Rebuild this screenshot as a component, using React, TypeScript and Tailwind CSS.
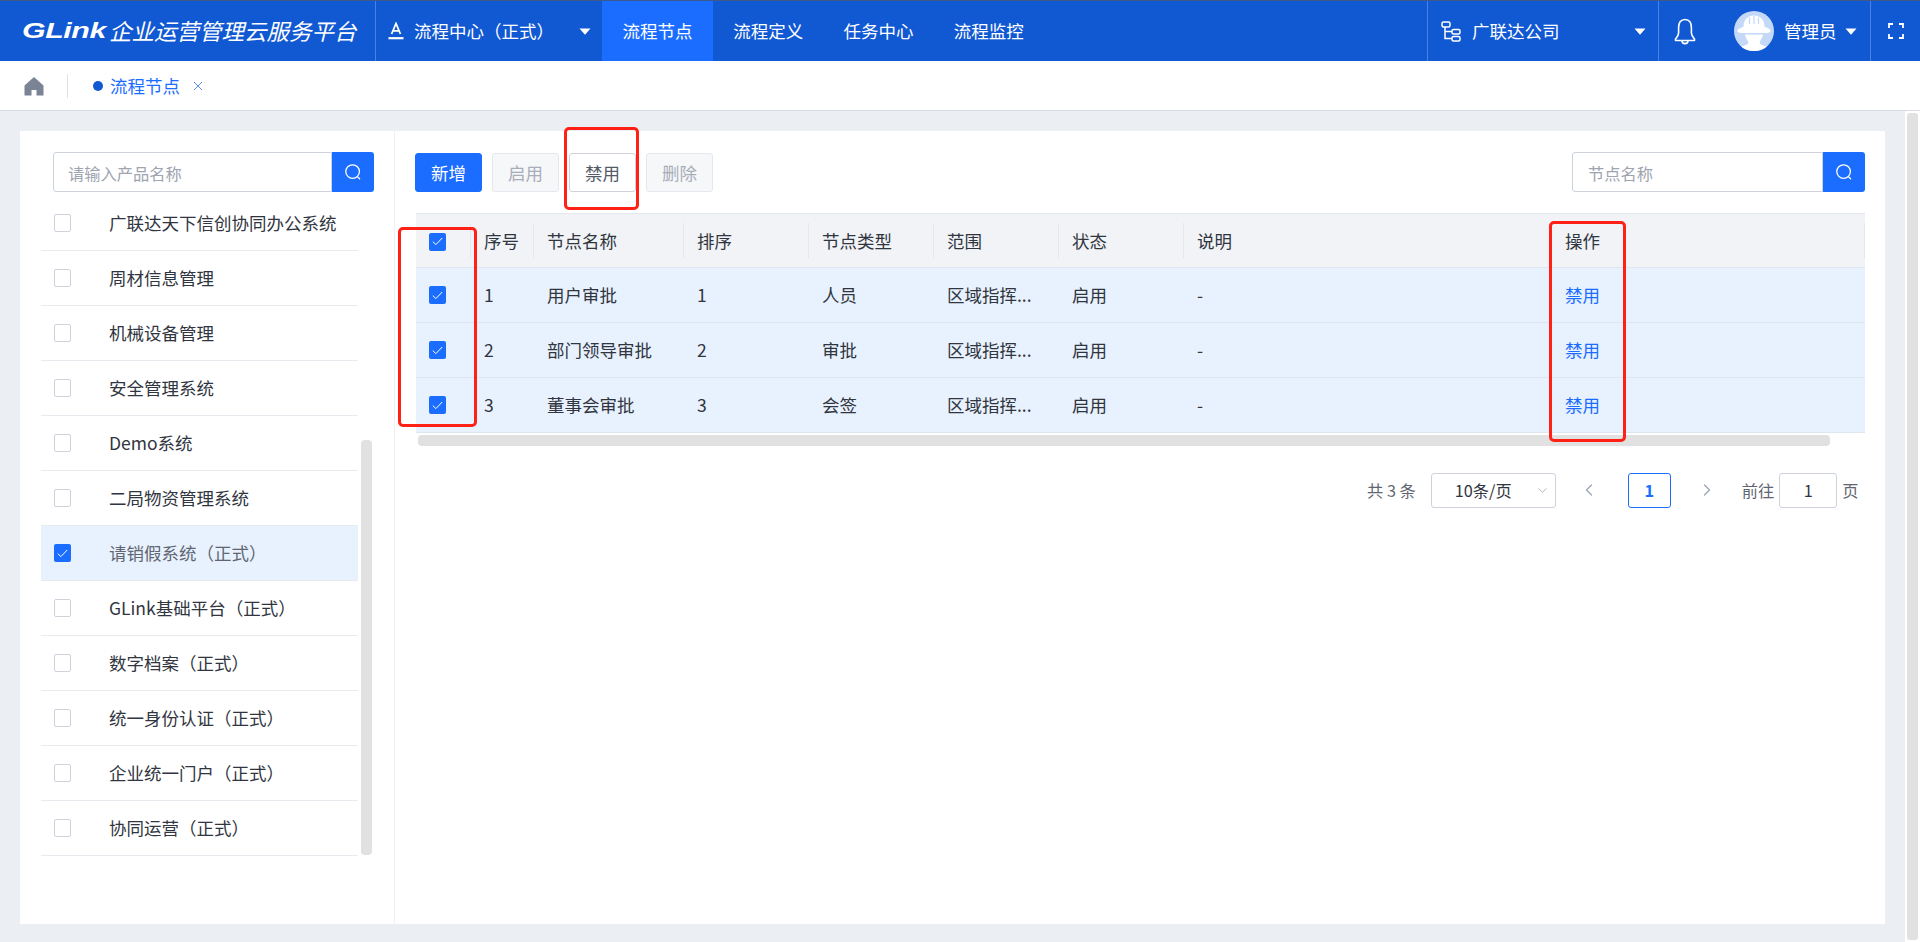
import React from "react";
import { ChevronDown, ChevronLeft, ChevronRight } from "lucide-react";

const Caret = () => (
  <svg width="12" height="7" viewBox="0 0 12 7" className="shrink-0">
    <path d="M0.5 0.5H11.5L6 6.8Z" fill="#fff" />
  </svg>
);

const SearchIcon = () => (
  <svg width="18" height="18" viewBox="0 0 18 18" fill="none" stroke="#fff" strokeWidth="1.3" strokeLinecap="round">
    <circle cx="8.6" cy="8.6" r="6.8" />
    <path d="M13.4 13.6L15.6 15.8" />
  </svg>
);

const Check = ({ checked }: { checked?: boolean }) =>
  checked ? (
    <span className="flex h-[18px] w-[17px] shrink-0 items-center justify-center rounded-[2px] bg-[#1a6dff]">
      <svg width="11" height="9" viewBox="0 0 11 9" fill="none" stroke="#fff" strokeWidth="1">
        <path d="M0.8 4.6L3.9 7.6L10.2 1" />
      </svg>
    </span>
  ) : (
    <span className="h-[18px] w-[17px] shrink-0 rounded-[2px] border border-[#cdd2dd] bg-white" />
  );

const products = [
  "广联达天下信创协同办公系统",
  "周材信息管理",
  "机械设备管理",
  "安全管理系统",
  "Demo系统",
  "二局物资管理系统",
  "请销假系统（正式）",
  "GLink基础平台（正式）",
  "数字档案（正式）",
  "统一身份认证（正式）",
  "企业统一门户（正式）",
  "协同运营（正式）",
];

const gridCols = "grid grid-cols-[55px_63px_150px_125px_125px_125px_125px_368px_313px]";

const headers = ["序号", "节点名称", "排序", "节点类型", "范围", "状态", "说明", "操作"];

const rows = [
  ["1", "用户审批", "1", "人员", "区域指挥...", "启用", "-"],
  ["2", "部门领导审批", "2", "审批", "区域指挥...", "启用", "-"],
  ["3", "董事会审批", "3", "会签", "区域指挥...", "启用", "-"],
];

const NavTab = ({ label, active }: { label: string; active?: boolean }) => (
  <div className={`flex h-full items-center justify-center ${active ? "w-[111px] bg-[#1a6dff]" : "w-[110.3px]"}`}>{label}</div>
);

const ToolButton = ({ label, kind }: { label: string; kind: "primary" | "disabled" | "normal" }) => (
  <div
    className={`flex h-[39px] w-[67px] items-center justify-center rounded-[3px] border pt-[2px] ${
      kind === "primary"
        ? "border-[#1a6dff] bg-[#1a6dff] text-white"
        : kind === "disabled"
          ? "border-[#e4e7ed] bg-[#f6f7f9] text-[#a8aeb9]"
          : "border-[#cdd2dd] bg-white text-[#555b66]"
    }`}
  >
    {label}
  </div>
);

const RedBox = ({ className }: { className: string }) => (
  <div className={`pointer-events-none absolute rounded-[5px] border-[3px] border-[#ff2016] ${className}`} />
);

export default function App() {
  return (
    <div className="relative flex h-[942px] w-[1920px] flex-col overflow-hidden bg-[#ebeef2] font-['Noto_Sans_CJK_SC','Noto_Sans',sans-serif] text-[17.5px] text-[#303540]">
      {/* top bar */}
      <header className="flex h-[61px] shrink-0 items-stretch border-t border-[#3d5a8a] bg-[#1158d3] text-white">
        <div className="flex w-[376px] shrink-0 items-center border-r border-[#4a82e0] pl-[22px]">
          <span className="inline-block w-[81px]">
            <span className="inline-block origin-left scale-x-[1.38] font-['Liberation_Sans',sans-serif] text-[22px] leading-none font-bold tracking-[-0.3px] italic">GLink</span>
          </span>
          <span className="ml-[6px] text-[22.5px] whitespace-nowrap italic">企业运营管理云服务平台</span>
        </div>
        <div className="flex w-[226px] shrink-0 items-center pl-[12px]">
          <svg width="16" height="18" viewBox="0 0 16 18" fill="none" stroke="#fff" strokeWidth="1.8">
            <path d="M3.6 12L8 1.5L12.4 12M5.2 8.8H10.8" />
            <path d="M0.5 16.2H15.5" strokeWidth="2.2" />
          </svg>
          <span className="ml-[10px] whitespace-nowrap">流程中心（正式）</span>
          <span className="ml-[25px]">
            <Caret />
          </span>
        </div>
        <NavTab label="流程节点" active />
        <NavTab label="流程定义" />
        <NavTab label="任务中心" />
        <NavTab label="流程监控" />
        <div className="flex-1" />
        <div className="flex w-[232px] shrink-0 items-center border-x border-[#4a82e0] pl-[13px]">
          <svg width="20" height="21" viewBox="0 0 20 21" fill="none" stroke="#fff" strokeWidth="1.5">
            <rect x="1" y="1" width="8" height="5" rx="1.5" />
            <rect x="11" y="8.5" width="8" height="4.5" rx="1.5" />
            <rect x="11" y="15.5" width="8" height="4.5" rx="1.5" />
            <path d="M4 6V17.5H11M4 10.5H11" />
          </svg>
          <span className="ml-[11px] whitespace-nowrap">广联达公司</span>
          <span className="ml-[74px]">
            <Caret />
          </span>
        </div>
        <div className="flex w-[211px] shrink-0 items-center pl-[15px]">
          <svg width="22" height="27" viewBox="0 0 22 27" fill="none" stroke="#fff" strokeWidth="1.6" strokeLinejoin="round">
            <path d="M11 1.5C6.5 1.5 4.6 5 4.6 9.5V15C4.6 17.5 2.6 19.5 1.5 21V22.5H20.5V21C19.4 19.5 17.4 17.5 17.4 15V9.5C17.4 5 15.5 1.5 11 1.5Z" />
            <path d="M8 22.5C8 24.5 9.3 25.6 11 25.6C12.7 25.6 14 24.5 14 22.5" />
          </svg>
          <svg width="40" height="40" viewBox="0 0 40 40" className="ml-[38px] shrink-0">
            <circle cx="20" cy="20" r="20" fill="#c4d9f8" />
            <path d="M9.5 16C9.5 8.5 14 4.5 20 4.5C26 4.5 30.5 8.5 30.5 16C33 16.5 36.5 18 36.5 20C36.5 21.5 34 22 32 22H8C6 22 3.5 21.5 3.5 20C3.5 18 7 16.5 9.5 16Z" fill="#fff" />
            <path d="M11 23.5H29C28.6 27 26 29.5 25.6 31.5C25.4 33 29 34.5 33 35.5C29.5 38.5 25 40 20 40C15 40 10.5 38.5 7 35.5C11 34.5 14.6 33 14.4 31.5C14 29.5 11.4 27 11 23.5Z" fill="#fff" />
            <path d="M15.5 6.5V13M20 5V13M24.5 6.5V13" stroke="#c4d9f8" strokeWidth="1.2" />
          </svg>
          <span className="ml-[10px] whitespace-nowrap">管理员</span>
          <span className="ml-[8px]">
            <Caret />
          </span>
        </div>
        <div className="flex w-[50px] shrink-0 items-center justify-center border-l border-[#4a82e0]">
          <svg width="16" height="16" viewBox="0 0 16 16" fill="none" stroke="#fff" strokeWidth="1.8">
            <path d="M1 5V1H5M11 1H15V5M15 11V15H11M5 15H1V11" />
          </svg>
        </div>
      </header>

      {/* tab strip */}
      <div className="flex h-[50px] shrink-0 items-center border-b border-[#d8dce6] bg-white">
        <svg width="20" height="20" viewBox="0 0 20 20" className="ml-[24px] shrink-0">
          <path d="M10 1L0.5 9.5V19.5H7.5V14H12.5V19.5H19.5V9.5Z" fill="#7b8494" />
        </svg>
        <div className="ml-[23px] h-[24px] w-px bg-[#dfe2e8]" />
        <span className="ml-[25px] h-[10px] w-[10px] rounded-full bg-[#1158d3]" />
        <span className="ml-[7px] pt-[2px] text-[#1a6dff]">流程节点</span>
        <svg width="10" height="10" viewBox="0 0 10 10" className="ml-[13px]" stroke="#5f8ff0" strokeWidth="1">
          <path d="M1 1L9 9M9 1L1 9" />
        </svg>
      </div>

      {/* body */}
      <div className="flex min-h-0 flex-1">
        <main className="flex min-w-0 flex-1 pt-[20px] pr-[20px] pb-[18px] pl-[20px]">
          <div className="flex flex-1 bg-white">
            {/* left panel */}
            <aside className="flex w-[375px] shrink-0 flex-col overflow-hidden border-r border-[#eef0f4]">
              <div className="mt-[21px] ml-[33px] flex h-[40px] w-[321px] shrink-0">
                <div className="flex flex-1 items-center rounded-l-[3px] border border-[#cdd2dd] pt-[2px] pl-[14px] text-[16.25px] text-[#9ea4b0]">请输入产品名称</div>
                <div className="flex w-[42px] items-center justify-center rounded-r-[3px] bg-[#1a6dff]">
                  <SearchIcon />
                </div>
              </div>
              <div className="mt-[4px] flex">
                <ul className="ml-[21px] w-[317px]">
                  {products.map((p) => {
                    const sel = p === "请销假系统（正式）";
                    return (
                      <li key={p} className={`flex h-[55px] items-center border-b border-[#e8eaef] pl-[13px] ${sel ? "bg-[#e8f2fe] text-[#5f6672]" : ""}`}>
                        <Check checked={sel} />
                        <span className="ml-[38px] whitespace-nowrap">{p}</span>
                      </li>
                    );
                  })}
                </ul>
                <div className="mt-[244px] ml-[3px] h-[415px] w-[11px] rounded-[4px] bg-[#e1e1e1]" />
              </div>
            </aside>

            {/* right panel */}
            <section className="flex min-w-0 flex-1 flex-col pt-[21px] pr-[20px] pl-[20px]">
              <div className="flex h-[40px] shrink-0 items-center">
                <div className="flex gap-[10px]">
                  <ToolButton label="新增" kind="primary" />
                  <ToolButton label="启用" kind="disabled" />
                  <ToolButton label="禁用" kind="normal" />
                  <ToolButton label="删除" kind="disabled" />
                </div>
                <div className="ml-auto flex h-[40px] w-[293px]">
                  <div className="flex flex-1 items-center rounded-l-[3px] border border-[#cdd2dd] pt-[2px] pl-[15px] text-[16.25px] text-[#9ea4b0]">节点名称</div>
                  <div className="flex w-[42px] items-center justify-center rounded-r-[3px] bg-[#1a6dff]">
                    <SearchIcon />
                  </div>
                </div>
              </div>

              <div className="mt-[21px] ml-px">
                <div className={`${gridCols} h-[54px] items-center border-t border-[#e4e7ed] bg-[#f1f3f6]`}>
                  <div className="flex h-[35px] items-center border-r border-[#e4e7ed] pt-[2px] pl-[13px]">
                    <Check checked />
                  </div>
                  {headers.map((h) => (
                    <div key={h} className="flex h-[35px] items-center border-r border-[#e4e7ed] pt-[2px] pl-[13px] whitespace-nowrap">
                      {h}
                    </div>
                  ))}
                </div>
                {rows.map((r) => (
                  <div key={r[0]} className={`${gridCols} h-[55px] items-center border-t border-[#dfe6f0] bg-[#e8f2fe]`}>
                    <div className="pl-[13px]">
                      <Check checked />
                    </div>
                    {r.map((c, i) => (
                      <div key={i} className="pl-[13px] whitespace-nowrap">
                        {c}
                      </div>
                    ))}
                    <div className="pl-[13px] text-[#1a6dff]">禁用</div>
                  </div>
                ))}
                <div className="h-px bg-[#dfe6f0]" />
                <div className="mt-[2px] ml-[2px] h-[11px] w-[1412px] rounded-[4px] bg-[#e1e1e1]" />
              </div>

              <div className="mt-[26px] flex h-[36px] items-center text-[16.25px]">
                <span className="ml-[952px] whitespace-pre text-[#5f6672]">共 3 条</span>
                <div className="ml-[15px] flex h-[35px] w-[125px] items-center rounded-[3px] border border-[#cdd2dd] pl-[23px] whitespace-nowrap">
                  10条/页
                  <ChevronDown size={15} strokeWidth={1.2} className="ml-[23px] text-[#9aa3b2]" />
                </div>
                <ChevronLeft size={20} strokeWidth={1.5} className="ml-[23px] text-[#9aa5b8]" />
                <div className="ml-[29px] flex h-[35px] w-[43px] items-center justify-center rounded-[3px] border border-[#1a6dff] font-bold text-[#1a6dff]">1</div>
                <ChevronRight size={20} strokeWidth={1.5} className="ml-[26px] text-[#9aa5b8]" />
                <span className="ml-[25px] whitespace-nowrap text-[#5f6672]">前往</span>
                <div className="ml-[5px] flex h-[35px] w-[58px] items-center justify-center rounded-[3px] border border-[#cdd2dd]">1</div>
                <span className="ml-[5px] text-[#5f6672]">页</span>
              </div>
            </section>
          </div>
        </main>
        <div className="w-[15px] shrink-0 bg-white pt-[2px] pr-[2px] pb-[2px] pl-[2px]">
          <div className="h-full rounded-[3px] bg-[#e1e1e1]" />
        </div>
      </div>

      <RedBox className="top-[127px] left-[564px] h-[83px] w-[75px]" />
      <RedBox className="top-[227px] left-[398px] h-[200px] w-[79px]" />
      <RedBox className="top-[221px] left-[1549px] h-[221px] w-[77px]" />
    </div>
  );
}
